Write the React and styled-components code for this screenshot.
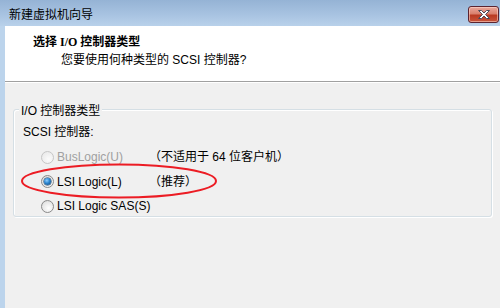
import React from "react";
import styled, { createGlobalStyle } from "styled-components";

const Global = createGlobalStyle`
  html, body { margin: 0; padding: 0; background: #f0f0f0; }
  body { width: 500px; height: 308px; overflow: hidden;
    font-family: "Liberation Sans", "Noto Sans CJK SC", sans-serif; font-size: 12px; color: #000; }
  #root { width: 500px; height: 308px; }
`;

const Frame = styled.div`
  width: 500px;
  height: 308px;
  display: flex;
  flex-direction: column;
  background: #bcd4ec;
`;

const TitleBar = styled.div`
  height: 26px;
  flex: none;
  display: flex;
  align-items: flex-start;
  justify-content: space-between;
  background: linear-gradient(to bottom, #95b3d5 0%, #a9c4e2 60%, #b9d1ea 100%);
`;

const Title = styled.div`
  padding: 7px 0 0 9px;
  line-height: 16px;
  font-size: 12px;
  color: #000;
`;

const CloseButton = styled.div`
  margin-top: 6px;
  margin-right: 1px;
  width: 29px;
  height: 15px;
  border: 1px solid #5b2430;
  border-radius: 3px;
  background: linear-gradient(to bottom, #eaa79b 0%, #d9806d 45%, #b93a22 55%, #c8553c 100%);
  box-shadow: inset 0 0 0 1px rgba(255, 220, 210, 0.55);
  display: flex;
  align-items: center;
  justify-content: center;
`;

const ClientRow = styled.div`
  flex: 1;
  display: flex;
`;

const LeftEdge = styled.div`
  width: 5px;
  flex: none;
  background: #bcd4ec;
`;

const Client = styled.div`
  flex: 1;
  display: flex;
  flex-direction: column;
  background: #f0f0f0;
`;

const Header = styled.div`
  height: 55px;
  flex: none;
  background: #fff;
  border-bottom: 1px solid #a0a0a0;
  padding-top: 8px;
  box-sizing: border-box;
  height: 56px;
`;

const HeaderTitle = styled.div`
  padding-left: 28px;
  line-height: 16px;
  font-weight: bold;
  font-family: "Liberation Serif", "Noto Sans CJK SC", serif;
  font-size: 12px;
`;

const HeaderSub = styled.div`
  padding-left: 56px;
  margin-top: 2px;
  line-height: 16px;
`;

const HeaderGap = styled.div`
  height: 1px;
  background: #fff;
  flex: none;
`;

const GroupBox = styled.div`
  position: relative;
  margin: 26px 8px 0 8px;
  border: 1px solid #d5dfe5;
  border-radius: 3px;
  box-shadow: inset 1px 1px 0 #fff, 1px 1px 0 #fff;
  padding: 14px 0 0 9px;
  height: 108px;
  box-sizing: border-box;
`;

const Legend = styled.div`
  position: absolute;
  top: -7px;
  left: 5px;
  padding: 0 2px;
  line-height: 16px;
  background: #f0f0f0;
`;

const FieldLabel = styled.div`
  line-height: 16px;
  margin-bottom: 5px;
`;

const Row = styled.div`
  height: 24.5px;
  display: flex;
  align-items: center;
  padding-left: 18px;
  color: ${(p) => (p.$disabled ? "#a0a0a0" : "#000")};
`;

const Radio = styled.span`
  width: 11px;
  height: 11px;
  flex: none;
  border-radius: 50%;
  border: 1px solid ${(p) => (p.$disabled ? "#c6c6c6" : "#8a8a8a")};
  background: ${(p) =>
    p.$disabled
      ? "radial-gradient(circle at 60% 65%, #fbfbfb 0%, #ececec 70%, #e2e2e2 100%)"
      : "radial-gradient(circle at 60% 65%, #ffffff 0%, #e6e6e6 65%, #cfcfcf 100%)"};
  display: flex;
  align-items: center;
  justify-content: center;
`;

const Dot = styled.span`
  width: 7px;
  height: 7px;
  border-radius: 50%;
  background: radial-gradient(circle at 40% 35%, #8fd0ff 0%, #2a84cf 45%, #0d3f70 100%);
  box-shadow: 0 0 0 0.5px #123a5e;
`;

const OptionText = styled.span`
  width: 92px;
  margin-left: 3px;
  line-height: 16px;
  white-space: nowrap;
`;

const Note = styled.span`
  line-height: 16px;
  color: #000;
  white-space: nowrap;
`;

const Annotation = styled.svg`
  position: absolute;
  left: 0;
  top: 0;
  overflow: visible;
  pointer-events: none;
`;

function CloseIcon() {
  return (
    <svg width="16" height="11" viewBox="0 0 16 11">
      <path
        d="M2.5 1.5 L5.5 1.5 L8 4 L10.5 1.5 L13.5 1.5 L9.5 5.5 L13.5 9.5 L10.5 9.5 L8 7 L5.5 9.5 L2.5 9.5 L6.5 5.5 Z"
        fill="#fff"
        stroke="#4a4a5a"
        strokeWidth="1"
        strokeLinejoin="round"
      />
    </svg>
  );
}

const options = [
  { label: "BusLogic(U)", note: "（不适用于 64 位客户机）", disabled: true },
  { label: "LSI Logic(L)", note: "（推荐）", checked: true },
  { label: "LSI Logic SAS(S)", note: "" },
];

export default function App() {
  return (
    <>
      <Global />
      <Frame>
        <TitleBar>
          <Title>新建虚拟机向导</Title>
          <CloseButton>
            <CloseIcon />
          </CloseButton>
        </TitleBar>
        <ClientRow>
          <LeftEdge />
          <Client>
            <Header>
              <HeaderTitle>选择 I/O 控制器类型</HeaderTitle>
              <HeaderSub>您要使用何种类型的 SCSI 控制器?</HeaderSub>
            </Header>
            <HeaderGap />
            <GroupBox>
              <Legend>I/O 控制器类型</Legend>
              <FieldLabel>SCSI 控制器:</FieldLabel>
              {options.map((o) => (
                <Row key={o.label} $disabled={o.disabled}>
                  <Radio $disabled={o.disabled}>{o.checked && <Dot />}</Radio>
                  <OptionText>{o.label}</OptionText>
                  {o.note && <Note>{o.note}</Note>}
                </Row>
              ))}
              <Annotation width="1" height="1">
                <ellipse cx="105" cy="71" rx="97" ry="16.5" fill="none" stroke="#ec1c24" strokeWidth="2" />
              </Annotation>
            </GroupBox>
          </Client>
        </ClientRow>
      </Frame>
    </>
  );
}
